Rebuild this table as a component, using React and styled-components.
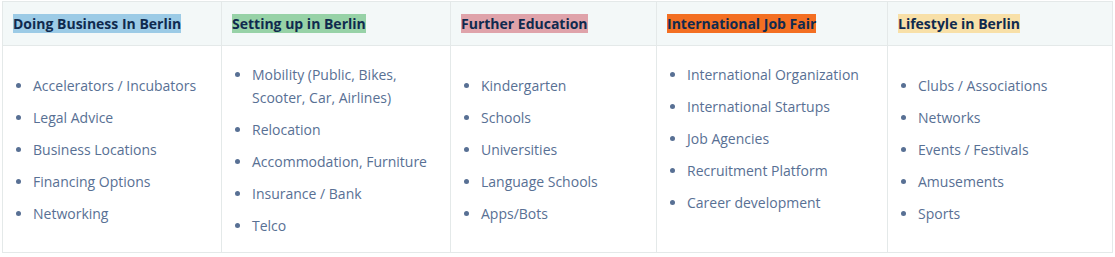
import React from "react";
import styled, { createGlobalStyle } from "styled-components";

const GlobalStyle = createGlobalStyle`
    body {
        margin: 0;
        background: #ffffff;
        font-family: "Open Sans", "Noto Sans", sans-serif;
    }
`;

const Table = styled.table`
    width: 1110px;
    margin: 1px 0 0 2px;
    border-collapse: collapse;
    table-layout: fixed;
    border: 1px solid #e4e9e9;
`;

const HeadCell = styled.th`
    background: #f3f8f8;
    border: 1px solid #e4e9e9;
    padding: 12px 10px;
    text-align: left;
    line-height: 19px;
`;

const Label = styled.span`
    display: inline-block;
    background: ${({ $bg }) => $bg};
    color: #0f2a4e;
    font-size: 14px;
    font-weight: 700;
    line-height: 19px;
`;

const BodyCell = styled.td`
    border: 1px solid #e4e9e9;
    padding: 18px 10px 15px;
    vertical-align: ${({ $top }) => ($top ? "top" : "middle")};
`;

const List = styled.ul`
    margin: 0;
    padding-left: 20px;
    list-style: disc;
    color: #587094;
`;

const Item = styled.li`
    font-size: 14px;
    line-height: 22.5px;
    margin-bottom: 9.5px;

    &:last-child {
        margin-bottom: 0;
    }
`;

const columns = [
    {
        title: "Doing Business In Berlin",
        color: "#9ccbe6",
        width: 219,
        items: ["Accelerators / Incubators", "Legal Advice", "Business Locations", "Financing Options", "Networking"],
    },
    {
        title: "Setting up in Berlin",
        color: "#97d2a7",
        width: 229,
        items: ["Mobility (Public, Bikes, Scooter, Car, Airlines)", "Relocation", "Accommodation, Furniture", "Insurance / Bank", "Telco"],
    },
    {
        title: "Further Education",
        color: "#dfa3aa",
        width: 206,
        items: ["Kindergarten", "Schools", "Universities", "Language Schools", "Apps/Bots"],
    },
    {
        title: "International Job Fair",
        color: "#f36f22",
        width: 231,
        top: true,
        items: ["International Organization", "International Startups", "Job Agencies", "Recruitment Platform", "Career development"],
    },
    {
        title: "Lifestyle in Berlin",
        color: "#f8e0a8",
        width: 225,
        items: ["Clubs / Associations", "Networks", "Events / Festivals", "Amusements", "Sports"],
    },
];

const App = () => {
    return (
        <>
            <GlobalStyle />
            <Table>
                <colgroup>
                    {columns.map((c) => (
                        <col key={c.title} width={c.width} />
                    ))}
                </colgroup>
                <thead>
                    <tr>
                        {columns.map((c) => (
                            <HeadCell key={c.title}>
                                <Label $bg={c.color}>{c.title}</Label>
                            </HeadCell>
                        ))}
                    </tr>
                </thead>
                <tbody>
                    <tr>
                        {columns.map((c) => (
                            <BodyCell key={c.title} $top={c.top}>
                                <List>
                                    {c.items.map((item) => (
                                        <Item key={item}>{item}</Item>
                                    ))}
                                </List>
                            </BodyCell>
                        ))}
                    </tr>
                </tbody>
            </Table>
        </>
    );
};

export default App;
